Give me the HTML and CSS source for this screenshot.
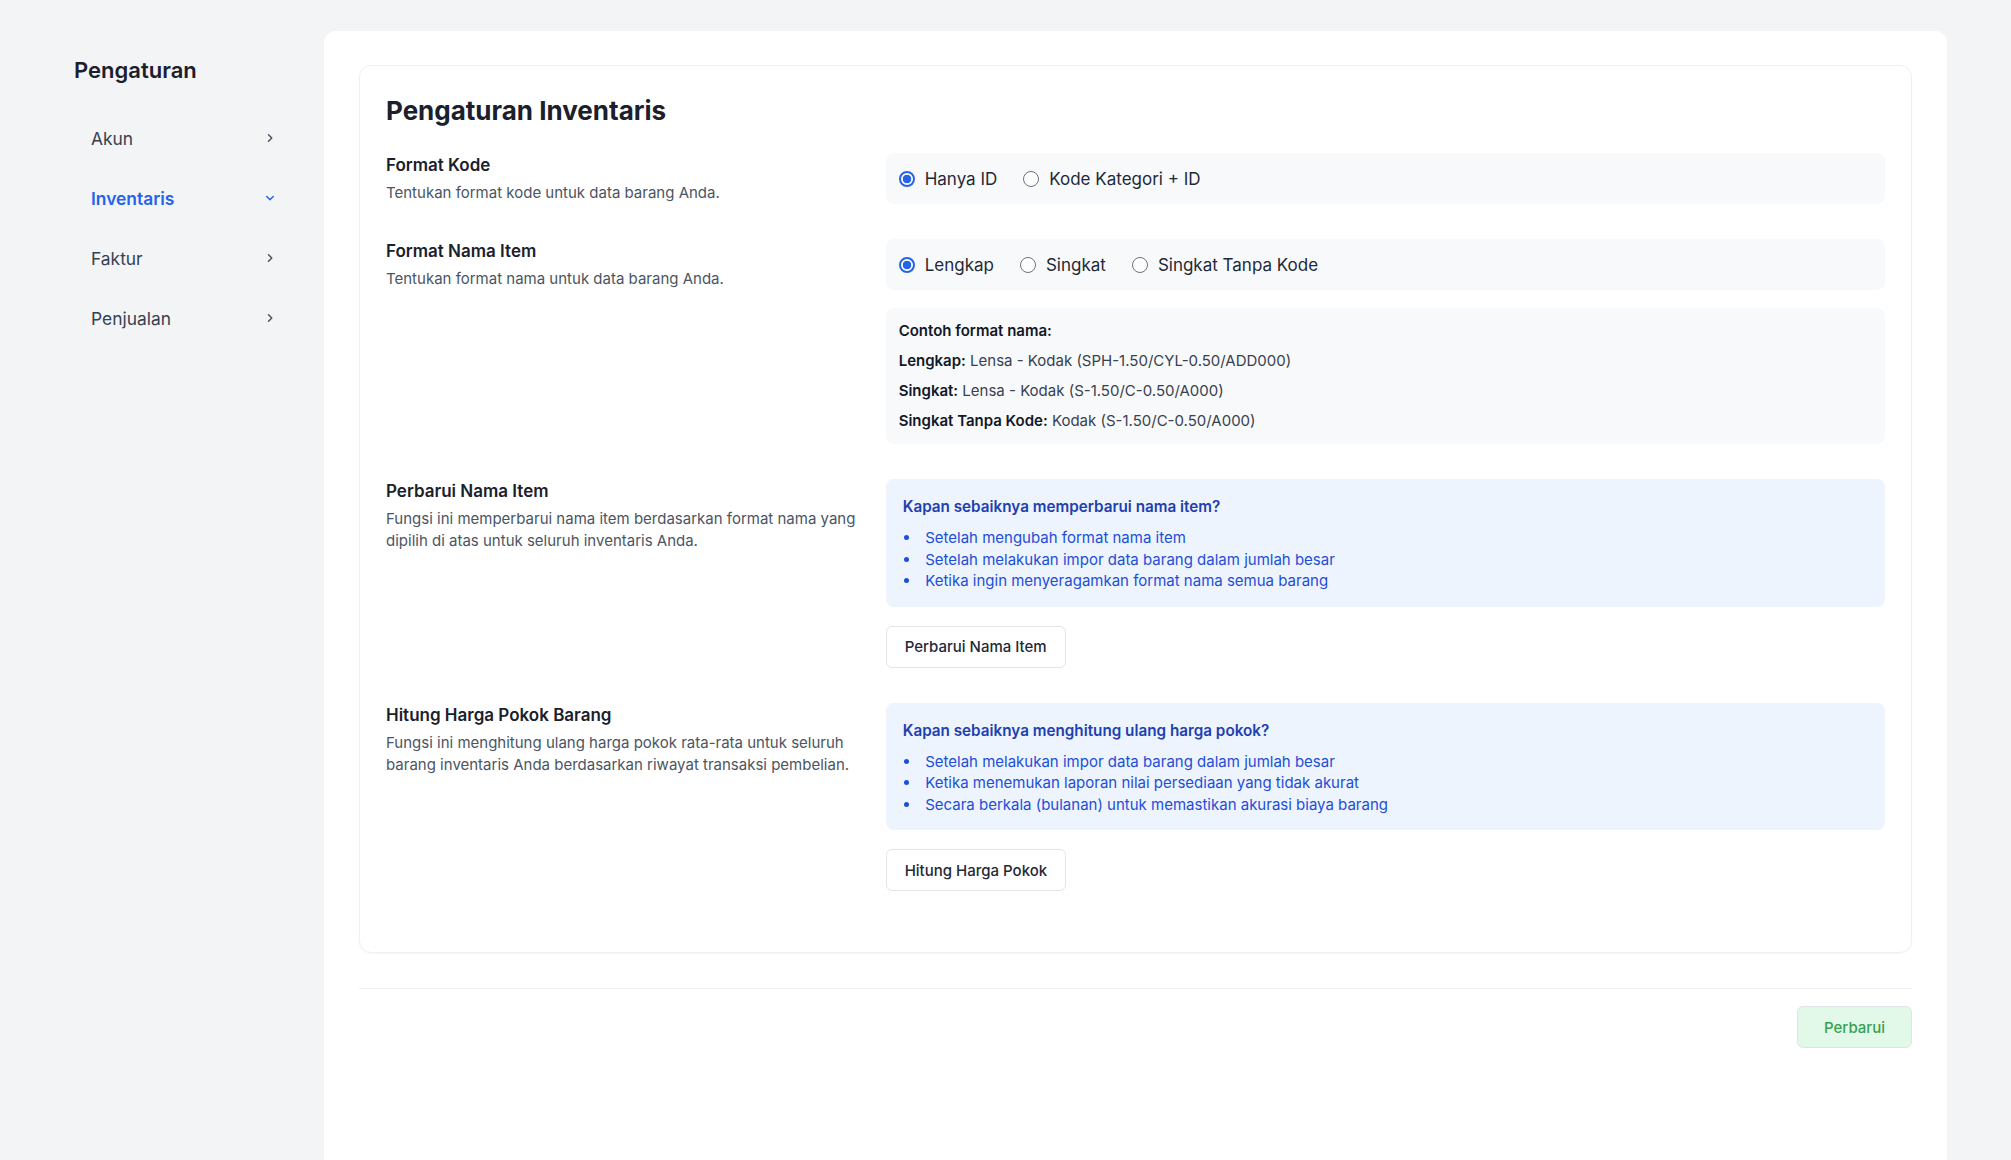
FILE: index.html
```html
<!DOCTYPE html>
<html lang="id">
<head>
<meta charset="utf-8">
<title>Pengaturan Inventaris</title>
<link rel="stylesheet" href="styles.css">
</head>
<body>
<div class="layout">
  <aside class="sidebar">
    <h2 class="sidebar-title">Pengaturan</h2>
    <nav class="nav">
      <a class="nav-item">
        <span>Akun</span>
        <svg class="chev" viewBox="0 0 24 24" width="14" height="14"><path d="M9.5 17.5 15 12 9.5 6.5"/></svg>
      </a>
      <a class="nav-item active">
        <span>Inventaris</span>
        <svg class="chev" viewBox="0 0 24 24" width="14" height="14"><path d="M6.5 9.5 12 15l5.5-5.5"/></svg>
      </a>
      <a class="nav-item">
        <span>Faktur</span>
        <svg class="chev" viewBox="0 0 24 24" width="14" height="14"><path d="M9.5 17.5 15 12 9.5 6.5"/></svg>
      </a>
      <a class="nav-item">
        <span>Penjualan</span>
        <svg class="chev" viewBox="0 0 24 24" width="14" height="14"><path d="M9.5 17.5 15 12 9.5 6.5"/></svg>
      </a>
    </nav>
  </aside>

  <main class="panel">
    <section class="card">
      <h1 class="card-title">Pengaturan Inventaris</h1>

      <div class="row">
        <div class="row-label">
          <h3>Format Kode</h3>
          <p>Tentukan format kode untuk data barang Anda.</p>
        </div>
        <div class="row-body">
          <div class="radio-group">
            <label class="radio"><span class="dot checked"></span>Hanya ID</label>
            <label class="radio"><span class="dot"></span>Kode Kategori + ID</label>
          </div>
        </div>
      </div>

      <div class="row">
        <div class="row-label">
          <h3>Format Nama Item</h3>
          <p>Tentukan format nama untuk data barang Anda.</p>
        </div>
        <div class="row-body">
          <div class="radio-group">
            <label class="radio"><span class="dot checked"></span>Lengkap</label>
            <label class="radio"><span class="dot"></span>Singkat</label>
            <label class="radio"><span class="dot"></span>Singkat Tanpa Kode</label>
          </div>
          <div class="example">
            <p class="example-head">Contoh format nama:</p>
            <p><b>Lengkap:</b> Lensa - Kodak (SPH-1.50/CYL-0.50/ADD000)</p>
            <p><b>Singkat:</b> Lensa - Kodak (S-1.50/C-0.50/A000)</p>
            <p><b>Singkat Tanpa Kode:</b> Kodak (S-1.50/C-0.50/A000)</p>
          </div>
        </div>
      </div>

      <div class="row">
        <div class="row-label">
          <h3>Perbarui Nama Item</h3>
          <p>Fungsi ini memperbarui nama item berdasarkan format nama yang dipilih di atas untuk seluruh inventaris Anda.</p>
        </div>
        <div class="row-body">
          <div class="info">
            <p class="info-head">Kapan sebaiknya memperbarui nama item?</p>
            <ul>
              <li>Setelah mengubah format nama item</li>
              <li>Setelah melakukan impor data barang dalam jumlah besar</li>
              <li>Ketika ingin menyeragamkan format nama semua barang</li>
            </ul>
          </div>
          <button class="btn">Perbarui Nama Item</button>
        </div>
      </div>

      <div class="row">
        <div class="row-label">
          <h3>Hitung Harga Pokok Barang</h3>
          <p>Fungsi ini menghitung ulang harga pokok rata-rata untuk seluruh barang inventaris Anda berdasarkan riwayat transaksi pembelian.</p>
        </div>
        <div class="row-body">
          <div class="info">
            <p class="info-head">Kapan sebaiknya menghitung ulang harga pokok?</p>
            <ul>
              <li>Setelah melakukan impor data barang dalam jumlah besar</li>
              <li>Ketika menemukan laporan nilai persediaan yang tidak akurat</li>
              <li>Secara berkala (bulanan) untuk memastikan akurasi biaya barang</li>
            </ul>
          </div>
          <button class="btn">Hitung Harga Pokok</button>
        </div>
      </div>
    </section>

    <div class="divider"></div>
    <div class="actions">
      <button class="btn-save">Perbarui</button>
    </div>
  </main>
</div>
</body>
</html>
```

FILE: styles.css
```css
* { box-sizing: border-box; }

html, body {
  margin: 0;
  padding: 0;
  height: 1160px;
  overflow: hidden;
}

body {
  background: #f3f4f6;
  font-family: Inter, "Noto Sans", sans-serif;
  color: #1f2937;
}

.layout {
  display: flex;
  height: 1160px;
}

/* Sidebar */
.sidebar {
  width: 324px;
  flex: none;
  padding: 56px 34px 0 74px;
}

.sidebar-title {
  margin: 0;
  font-size: 22px;
  line-height: 28px;
  font-weight: 600;
  color: #1a202c;
}

.nav {
  margin-top: 30px;
  display: flex;
  flex-direction: column;
  gap: 12px;
}

.nav-item {
  height: 48px;
  display: flex;
  align-items: center;
  justify-content: space-between;
  padding: 0 13px 0 17px;
  font-size: 17.4px;
  color: #374151;
}

.nav-item.active {
  color: #2563eb;
  font-weight: 600;
}

.chev {
  fill: none;
  stroke: #4b5563;
  stroke-width: 2.6;
  stroke-linecap: round;
  stroke-linejoin: round;
}

.nav-item.active .chev { stroke: #2563eb; }

/* Main panel */
.panel {
  flex: 1;
  margin: 31px 64px 0 0;
  background: #ffffff;
  border-radius: 12px 12px 0 0;
  padding: 34px 35px;
}

.card {
  border: 1px solid #eef0f2;
  border-radius: 12px;
  padding: 29px 26px 26px;
  box-shadow: 0 1px 2px rgba(16, 24, 40, 0.03);
}

.card-title {
  margin: 0 0 26px;
  font-size: 26px;
  line-height: 32px;
  font-weight: 700;
  color: #1a202c;
}

.row {
  display: flex;
  margin-bottom: 35px;
}

.row-label {
  width: 33.333%;
  flex: none;
  padding-right: 22px;
}

.row-label h3 {
  margin: 0;
  font-size: 17px;
  line-height: 24px;
  font-weight: 600;
  color: #1a202c;
}

.row-label p {
  margin: 5px 0 0;
  font-size: 15px;
  line-height: 22px;
  color: #4b5563;
}

.row-body {
  flex: 1;
  display: flex;
  flex-direction: column;
  align-items: flex-start;
}

.radio-group {
  align-self: stretch;
  display: flex;
  align-items: center;
  gap: 26px;
  background: #f8f9fb;
  border-radius: 8px;
  padding: 12px 13px;
  height: 51px;
}

.radio {
  display: flex;
  align-items: center;
  gap: 10px;
  font-size: 17px;
  line-height: 26px;
  color: #1f2937;
}

.dot {
  width: 16px;
  height: 16px;
  border-radius: 50%;
  border: 1.5px solid #6b7280;
  background: #fff;
  flex: none;
}

.dot.checked {
  border: 2px solid #2563eb;
  background: radial-gradient(circle, #2563eb 0 4px, #ffffff 4.6px);
}

.example {
  align-self: stretch;
  margin-top: 18px;
  background: #f8f9fb;
  border-radius: 8px;
  padding: 13px 13px 13px;
  font-size: 15px;
  line-height: 20px;
  color: #374151;
}

.example p { margin: 0 0 10px; }
.example p:last-child { margin-bottom: 0; }
.example b, .example-head { font-weight: 600; color: #111827; }

.info {
  align-self: stretch;
  background: #edf4fe;
  border-radius: 8px;
  padding: 18px 17px 15px;
  color: #1d4ed8;
}

.info-head {
  margin: 0;
  font-size: 15.25px;
  line-height: 20px;
  font-weight: 600;
  color: #1e40af;
}

.info ul {
  list-style: none;
  margin: 10px 0 0;
  padding: 0;
}

.info li {
  display: flex;
  align-items: center;
  font-size: 15px;
  line-height: 21.5px;
}

.info li::before {
  content: "";
  flex: none;
  width: 5px;
  height: 5px;
  border-radius: 50%;
  background: currentColor;
  margin: 0 16px 0 1.5px;
}

.btn {
  margin-top: 19px;
  height: 42px;
  padding: 0 18px;
  background: #ffffff;
  border: 1px solid #e2e5ea;
  border-radius: 6px;
  font-family: inherit;
  font-size: 15px;
  font-weight: 500;
  color: #1f2937;
}

.divider {
  margin-top: 35px;
  border-top: 1px solid #f0f1f3;
}

.actions {
  display: flex;
  justify-content: flex-end;
  margin-top: 17px;
}

.btn-save {
  height: 42px;
  width: 115px;
  background: #e2f9e9;
  border: 1px solid #dfe4e8;
  border-radius: 6px;
  font-family: inherit;
  font-size: 15px;
  font-weight: 500;
  color: #38a04f;
}
```
